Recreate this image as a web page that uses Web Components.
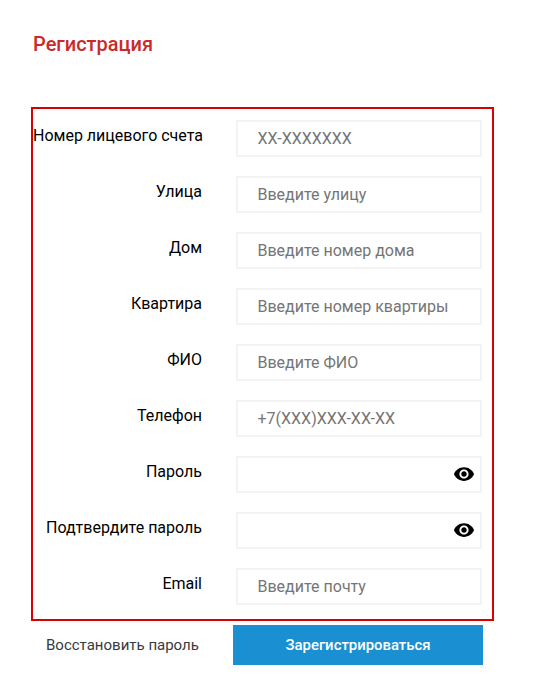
<!DOCTYPE html>
<html lang="ru">
<head>
<meta charset="utf-8">
<title>Регистрация</title>
<style>
  html, body { margin: 0; background: #fff; }
  body { font-family: Roboto, "Liberation Sans", sans-serif; }
</style>
</head>
<body>
<register-page>
  <form-row label="Номер лицевого счета" placeholder="XX-XXXXXXX"></form-row>
  <form-row label="Улица" placeholder="Введите улицу"></form-row>
  <form-row label="Дом" placeholder="Введите номер дома"></form-row>
  <form-row label="Квартира" placeholder="Введите номер квартиры"></form-row>
  <form-row label="ФИО" placeholder="Введите ФИО"></form-row>
  <form-row label="Телефон" placeholder="+7(XXX)XXX-XX-XX"></form-row>
  <form-row label="Пароль" type="password"></form-row>
  <form-row label="Подтвердите пароль" type="password"></form-row>
  <form-row label="Email" placeholder="Введите почту"></form-row>
</register-page>

<script>
// one label + input line of the form
class FormRow extends HTMLElement {
  connectedCallback() {
    if (this.shadowRoot) return;
    const isPassword = this.getAttribute('type') === 'password';
    const root = this.attachShadow({ mode: 'open' });
    root.innerHTML = `
      <style>
        :host {
          display: grid;
          grid-template-columns: 169px 246px;
          column-gap: 34px;
          height: 37px;
          color: #000;
        }
        label {
          font-size: 16px;
          line-height: 19px;
          text-align: right;
          white-space: nowrap;
          padding-top: 6px;
        }
        .field {
          position: relative;
          box-sizing: border-box;
          height: 37px;
          border: 2px solid #f3f3f3;
        }
        input {
          box-sizing: border-box;
          display: block;
          width: 100%;
          height: 100%;
          border: 0;
          outline: 0;
          padding: 0 19.5px;
          background: transparent;
          font: 16px Roboto, "Liberation Sans", sans-serif;
          color: #495057;
        }
        input::placeholder { color: #757575; opacity: 1; }
        svg {
          position: absolute;
          right: 5px;
          top: 5px;
          width: 22px;
          height: 22px;
          fill: #000;
        }
      </style>
      <label></label>
      <div class="field">
        <input>
        ${isPassword ? '<svg viewBox="0 0 24 24" aria-hidden="true"><path d="M12 4.5C7 4.5 2.73 7.61 1 12c1.73 4.39 6 7.5 11 7.5s9.27-3.11 11-7.5c-1.73-4.39-6-7.5-11-7.5zM12 17c-2.76 0-5-2.24-5-5s2.24-5 5-5 5 2.24 5 5-2.24 5-5 5zm0-8c-1.66 0-3 1.34-3 3s1.34 3 3 3 3-1.34 3-3-1.34-3-3-3z"/></svg>' : ''}
      </div>`;
    root.querySelector('label').textContent = this.getAttribute('label');
    const input = root.querySelector('input');
    input.type = isPassword ? 'password' : 'text';
    if (this.hasAttribute('placeholder')) input.placeholder = this.getAttribute('placeholder');
  }
}

// page shell: title, red framed form, footer actions
class RegisterPage extends HTMLElement {
  connectedCallback() {
    if (this.shadowRoot) return;
    const root = this.attachShadow({ mode: 'open' });
    root.innerHTML = `
      <style>
        :host {
          display: block;
          padding: 32px 0 0 31px;
          width: 523px;
          box-sizing: border-box;
        }
        h1 {
          margin: 0 0 51px 2px;
          font-size: 20px;
          line-height: 24px;
          font-weight: 500;
          color: #c92a2a;
        }
        .frame {
          box-sizing: border-box;
          width: 463px;
          height: 514px;
          border: 2px solid #d90000;
          padding: 11px 0 0 0;
          display: flex;
          flex-direction: column;
          gap: 19px;
        }
        .actions {
          display: flex;
          align-items: center;
          margin-top: 4px;
        }
        a {
          width: 202px;
          box-sizing: border-box;
          padding-left: 15px;
          font-size: 15px;
          color: #343a40;
          text-decoration: none;
          white-space: nowrap;
        }
        button {
          width: 250px;
          height: 40px;
          border: 0;
          background: #1a8fd1;
          color: #fff;
          font: 500 14.9px Roboto, "Liberation Sans", sans-serif;
        }
      </style>
      <h1>Регистрация</h1>
      <div class="frame"><slot></slot></div>
      <div class="actions">
        <a href="#">Восстановить пароль</a>
        <button type="button">Зарегистрироваться</button>
      </div>`;
  }
}

customElements.define('form-row', FormRow);
customElements.define('register-page', RegisterPage);
</script>
</body>
</html>
